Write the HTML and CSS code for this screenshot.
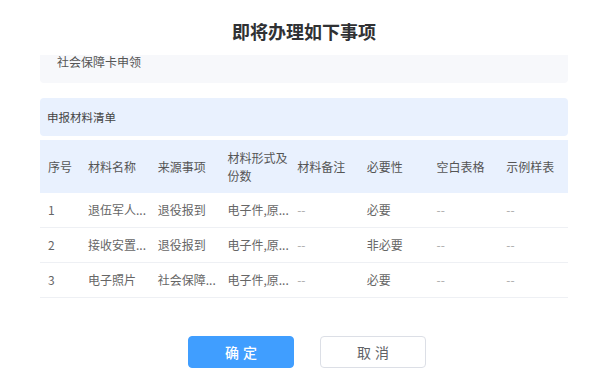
FILE: index.html
```html
<!DOCTYPE html>
<html lang="zh-CN">
<head>
<meta charset="utf-8">
<link rel="stylesheet" href="styles.css">
</head>
<body>
<div class="dialog">
  <h1 class="title">即将办理如下事项</h1>
  <div class="item-box">社会保障卡申领</div>
  <div class="section-head">申报材料清单</div>
  <div class="table">
    <div class="row head">
      <div class="cell">序号</div>
      <div class="cell">材料名称</div>
      <div class="cell">来源事项</div>
      <div class="cell">材料形式及份数</div>
      <div class="cell">材料备注</div>
      <div class="cell">必要性</div>
      <div class="cell">空白表格</div>
      <div class="cell">示例样表</div>
    </div>
    <div class="row">
      <div class="cell">1</div>
      <div class="cell">退伍军人...</div>
      <div class="cell">退役报到</div>
      <div class="cell">电子件,原...</div>
      <div class="cell dim">--</div>
      <div class="cell">必要</div>
      <div class="cell dim">--</div>
      <div class="cell dim">--</div>
    </div>
    <div class="row">
      <div class="cell">2</div>
      <div class="cell">接收安置...</div>
      <div class="cell">退役报到</div>
      <div class="cell">电子件,原...</div>
      <div class="cell dim">--</div>
      <div class="cell">非必要</div>
      <div class="cell dim">--</div>
      <div class="cell dim">--</div>
    </div>
    <div class="row">
      <div class="cell">3</div>
      <div class="cell">电子照片</div>
      <div class="cell">社会保障...</div>
      <div class="cell">电子件,原...</div>
      <div class="cell dim">--</div>
      <div class="cell">必要</div>
      <div class="cell dim">--</div>
      <div class="cell dim">--</div>
    </div>
  </div>
  <div class="actions">
    <button class="btn primary">确定</button>
    <button class="btn">取消</button>
  </div>
</div>
</body>
</html>
```

FILE: styles.css
```css
* { box-sizing: border-box; }
html, body {
  margin: 0;
  padding: 0;
  background: #fff;
  font-family: "Noto Sans CJK SC", "Noto Sans", sans-serif;
  color: #606266;
}
.dialog {
  width: 528px;
  margin-left: 40px;
}
.title {
  margin: 0;
  padding-top: 20px;
  height: 55px;
  line-height: 22px;
  font-size: 18px;
  font-weight: 700;
  color: #303133;
  text-align: center;
}
.item-box {
  height: 28px;
  background: #f7f8fb;
  border-radius: 0 0 4px 4px;
  padding-left: 17px;
  font-size: 12px;
  line-height: 14px;
  color: #555;
}
.section-head {
  margin-top: 15px;
  height: 38px;
  background: #e9f1fe;
  border-radius: 4px;
  padding-left: 7px;
  font-size: 11.5px;
  line-height: 38px;
  color: #444;
}
.table {
  margin-top: 4px;
}
.row {
  display: grid;
  grid-template-columns: 40px repeat(7, 1fr);
  align-items: center;
  height: 35px;
  border-bottom: 1px solid #eef0f4;
  font-size: 12px;
  color: #666;
}
.row.head {
  height: 53px;
  background: #e9f1fe;
  border-bottom: none;
  color: #555;
}
.cell {
  padding-left: 8px;
  padding-right: 0;
  line-height: 18px;
  white-space: nowrap;
}
.row.head .cell {
  white-space: normal;
}
.cell.dim {
  color: #aaa;
}
.actions {
  margin-top: 38px;
  display: flex;
  justify-content: center;
  gap: 26px;
  padding-left: 6px;
}
.btn {
  width: 106px;
  height: 32px;
  border: 1px solid #dcdfe6;
  border-radius: 4px;
  background: #fff;
  color: #606266;
  font-family: "Noto Sans CJK SC", sans-serif;
  font-size: 14px;
  letter-spacing: 4px;
  padding: 0 0 0 4px;
}
.btn.primary {
  background: #409eff;
  border-color: #409eff;
  color: #fff;
  font-weight: 500;
}
```
